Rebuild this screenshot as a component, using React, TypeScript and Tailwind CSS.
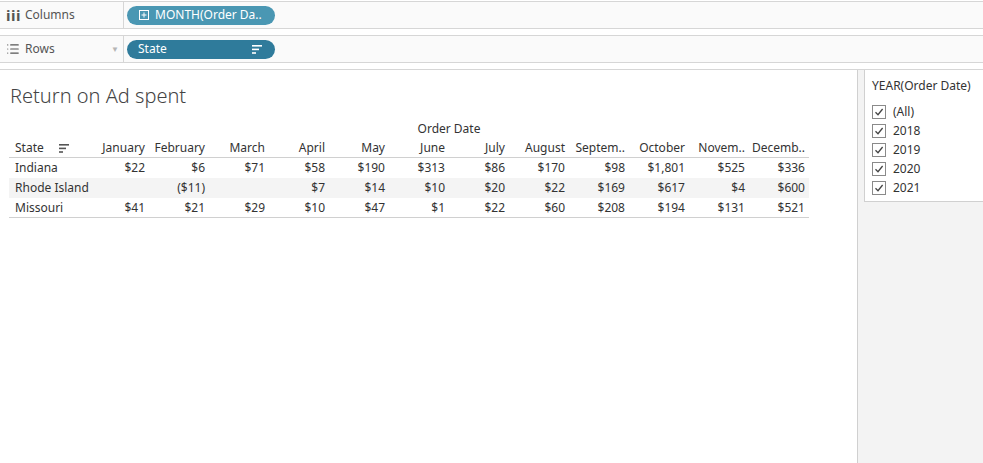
import { List } from "lucide-react";

const months = [
  "January",
  "February",
  "March",
  "April",
  "May",
  "June",
  "July",
  "August",
  "Septem..",
  "October",
  "Novem..",
  "Decemb..",
];

const rows = [
  { state: "Indiana", values: ["$22", "$6", "$71", "$58", "$190", "$313", "$86", "$170", "$98", "$1,801", "$525", "$336"] },
  { state: "Rhode Island", values: ["", "($11)", "", "$7", "$14", "$10", "$20", "$22", "$169", "$617", "$4", "$600"] },
  { state: "Missouri", values: ["$41", "$21", "$29", "$10", "$47", "$1", "$22", "$60", "$208", "$194", "$131", "$521"] },
];

const years = ["(All)", "2018", "2019", "2020", "2021"];

function SortIcon({ color }: { color: string }) {
  return (
    <svg width="10" height="9" viewBox="0 0 10 9" className="shrink-0">
      <rect x="0" y="0" width="10" height="1.6" fill={color} />
      <rect x="0" y="3.6" width="7" height="1.6" fill={color} />
      <rect x="0" y="7.2" width="4" height="1.6" fill={color} />
    </svg>
  );
}

function Checkbox() {
  return (
    <svg width="14" height="14" viewBox="0 0 14 14" className="shrink-0">
      <rect x="0.5" y="0.5" width="13" height="13" fill="#fff" stroke="#8a8a8a" />
      <path d="M3.5 7.2 L6 9.7 L10.6 4" fill="none" stroke="#444" strokeWidth="1.3" />
    </svg>
  );
}

function Shelf({ icon, label, caret, children }: { icon: React.ReactNode; label: string; caret?: boolean; children: React.ReactNode }) {
  return (
    <div className="flex h-[28px] border-y border-[#d6d6d6] bg-[#fafafa]">
      <div className="flex w-[124px] items-center border-r border-[#d6d6d6] pl-[6px] pr-[4px] text-[#555]">
        <div className="flex w-[19px] items-center">{icon}</div>
        <span className="flex-1 text-[12px]">{label}</span>
        {caret && <span className="text-[8px] text-[#b5b5b5]">▼</span>}
      </div>
      <div className="flex items-center pl-[3px]">{children}</div>
    </div>
  );
}

export default function App() {
  return (
    <div
      className="flex h-[463px] w-[983px] flex-col overflow-hidden bg-white text-[#333]"
      style={{ fontFamily: '"Noto Sans", "Open Sans", sans-serif' }}
    >
      {/* Shelves */}
      <div className="mt-px">
        <Shelf
          icon={<span className="text-[15px] font-bold leading-none tracking-[0.5px] text-[#555]">iii</span>}
          label="Columns"
        >
          <div className="flex h-[19px] w-[148px] items-center gap-[6px] rounded-full bg-[#4a97b3] pl-[12px] text-[12px] text-white">
            <svg width="10" height="10" viewBox="0 0 10 10">
              <rect x="0.5" y="0.5" width="9" height="9" fill="none" stroke="#fff" />
              <path d="M2.5 5 H7.5 M5 2.5 V7.5" stroke="#fff" />
            </svg>
            <span>MONTH(Order Da..</span>
          </div>
        </Shelf>
        <div className="h-[6px]" />
        <Shelf icon={<List className="h-[14px] w-[14px] text-[#555]" strokeWidth={2} />} label="Rows" caret>
          <div className="flex h-[19px] w-[148px] items-center justify-between rounded-full bg-[#2f7b9b] pl-[11px] pr-[13px] text-[12px] text-white">
            <span>State</span>
            <SortIcon color="#fff" />
          </div>
        </Shelf>
        <div className="h-[6px]" />
      </div>

      {/* Main area */}
      <div className="flex flex-1 border-t border-[#d6d6d6]">
        <div className="w-[858px] border-r border-[#d0d0d0] pl-[9px]">
          <div className="pl-px pt-[14px] text-[20px] font-light leading-[24px] text-[#444]">Return on Ad spent</div>

          <div className="mt-[11px] w-[800px] text-[12px]">
            <div className="grid h-[20px] grid-cols-[80px_720px] items-center">
              <div />
              <div className="text-center">Order Date</div>
            </div>
            <div className="grid h-[19px] grid-cols-[80px_repeat(12,60px)] items-center border-b border-[#d0d0d0]">
              <div className="flex items-center gap-[15px] pl-[6px]">
                <span>State</span>
                <SortIcon color="#555" />
              </div>
              {months.map((m) => (
                <div key={m} className="pr-[4px] text-right">
                  {m}
                </div>
              ))}
            </div>
            {rows.map((r, i) => (
              <div
                key={r.state}
                className={`grid h-[20px] grid-cols-[80px_repeat(12,60px)] items-center ${i === 1 ? "bg-[#f4f4f4]" : ""} ${i === rows.length - 1 ? "border-b border-[#d0d0d0]" : ""}`}
              >
                <div className="pl-[6px]">{r.state}</div>
                {r.values.map((v, j) => (
                  <div key={j} className="pr-[4px] text-right">
                    {v}
                  </div>
                ))}
              </div>
            ))}
          </div>
        </div>

        <div className="flex-1 bg-[#f3f3f3] pl-[6px]">
          <div className="h-[132px] border-b border-l border-[#d0d0d0] bg-white">
            <div className="pl-[7px] pt-[7px] text-[12px] text-[#333]">YEAR(Order Date)</div>
            <div className="mt-[10px] flex flex-col gap-[5px] pl-[7px]">
              {years.map((y) => (
                <div key={y} className="flex h-[14px] items-center gap-[7px] text-[12px]">
                  <Checkbox />
                  <span>{y}</span>
                </div>
              ))}
            </div>
          </div>
        </div>
      </div>
    </div>
  );
}
